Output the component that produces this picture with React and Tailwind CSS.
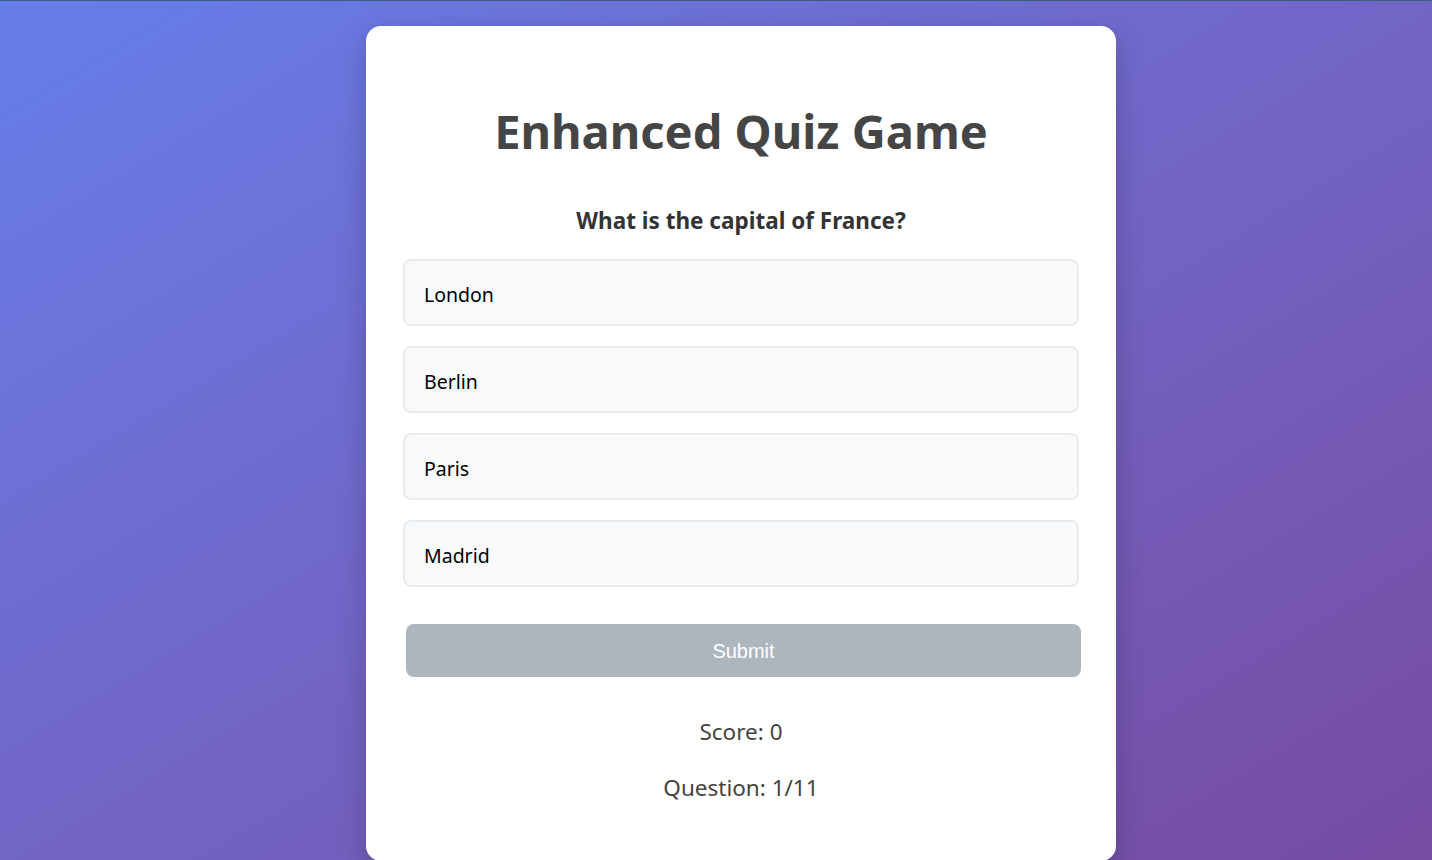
import React, { useState } from "react";

const questions = [
  { q: "What is the capital of France?", options: ["London", "Berlin", "Paris", "Madrid"] },
];

const App = () => {
  const [selected, setSelected] = useState(null);
  const [score] = useState(0);
  const current = questions[0];

  return (
    <div className="h-[860px] overflow-hidden border-t border-[#3d5a80] bg-gradient-to-br from-[#667eea] to-[#764ba2] flex justify-center pt-[25px] pl-[50px] font-['Noto_Sans',sans-serif]">
      <div className="w-[750px] h-[835px] shrink-0 bg-white rounded-[15px] shadow-[0_10px_30px_rgba(0,0,0,0.2)] px-[37px] flex flex-col">
        <h1 className="text-center text-[47px] font-bold text-[#454545] mt-[73px] leading-[64px]">Enhanced Quiz Game</h1>

        <div className="text-center text-[22.5px] font-bold text-[#333] mt-[42px] leading-[32px]">{current.q}</div>

        <div className="flex flex-col gap-[20px] mt-[22px]">
          {current.options.map((opt, i) => (
            <button
              key={opt}
              onClick={() => setSelected(i)}
              className={`h-[67px] w-full text-left px-[19px] pt-[4px] text-[19.5px] text-black bg-[#f8f9fa] border-2 rounded-[8px] ${selected === i ? "border-[#667eea]" : "border-[#e9ecef]"}`}
            >
              {opt}
            </button>
          ))}
        </div>

        <button
          disabled={selected === null}
          className="mt-[37px] ml-[3px] h-[53px] w-[675px] rounded-[8px] bg-[#adb5bd] text-white text-[20px] font-['Liberation_Sans',Arial,sans-serif]"
        >
          Submit
        </button>

        <div className="text-center text-[22.5px] text-[#444] mt-[39px] leading-[32px]">Score: {score}</div>
        <div className="text-center text-[22.5px] text-[#444] mt-[24px] leading-[32px]">Question: 1/11</div>
      </div>
    </div>
  );
};

export default App;
